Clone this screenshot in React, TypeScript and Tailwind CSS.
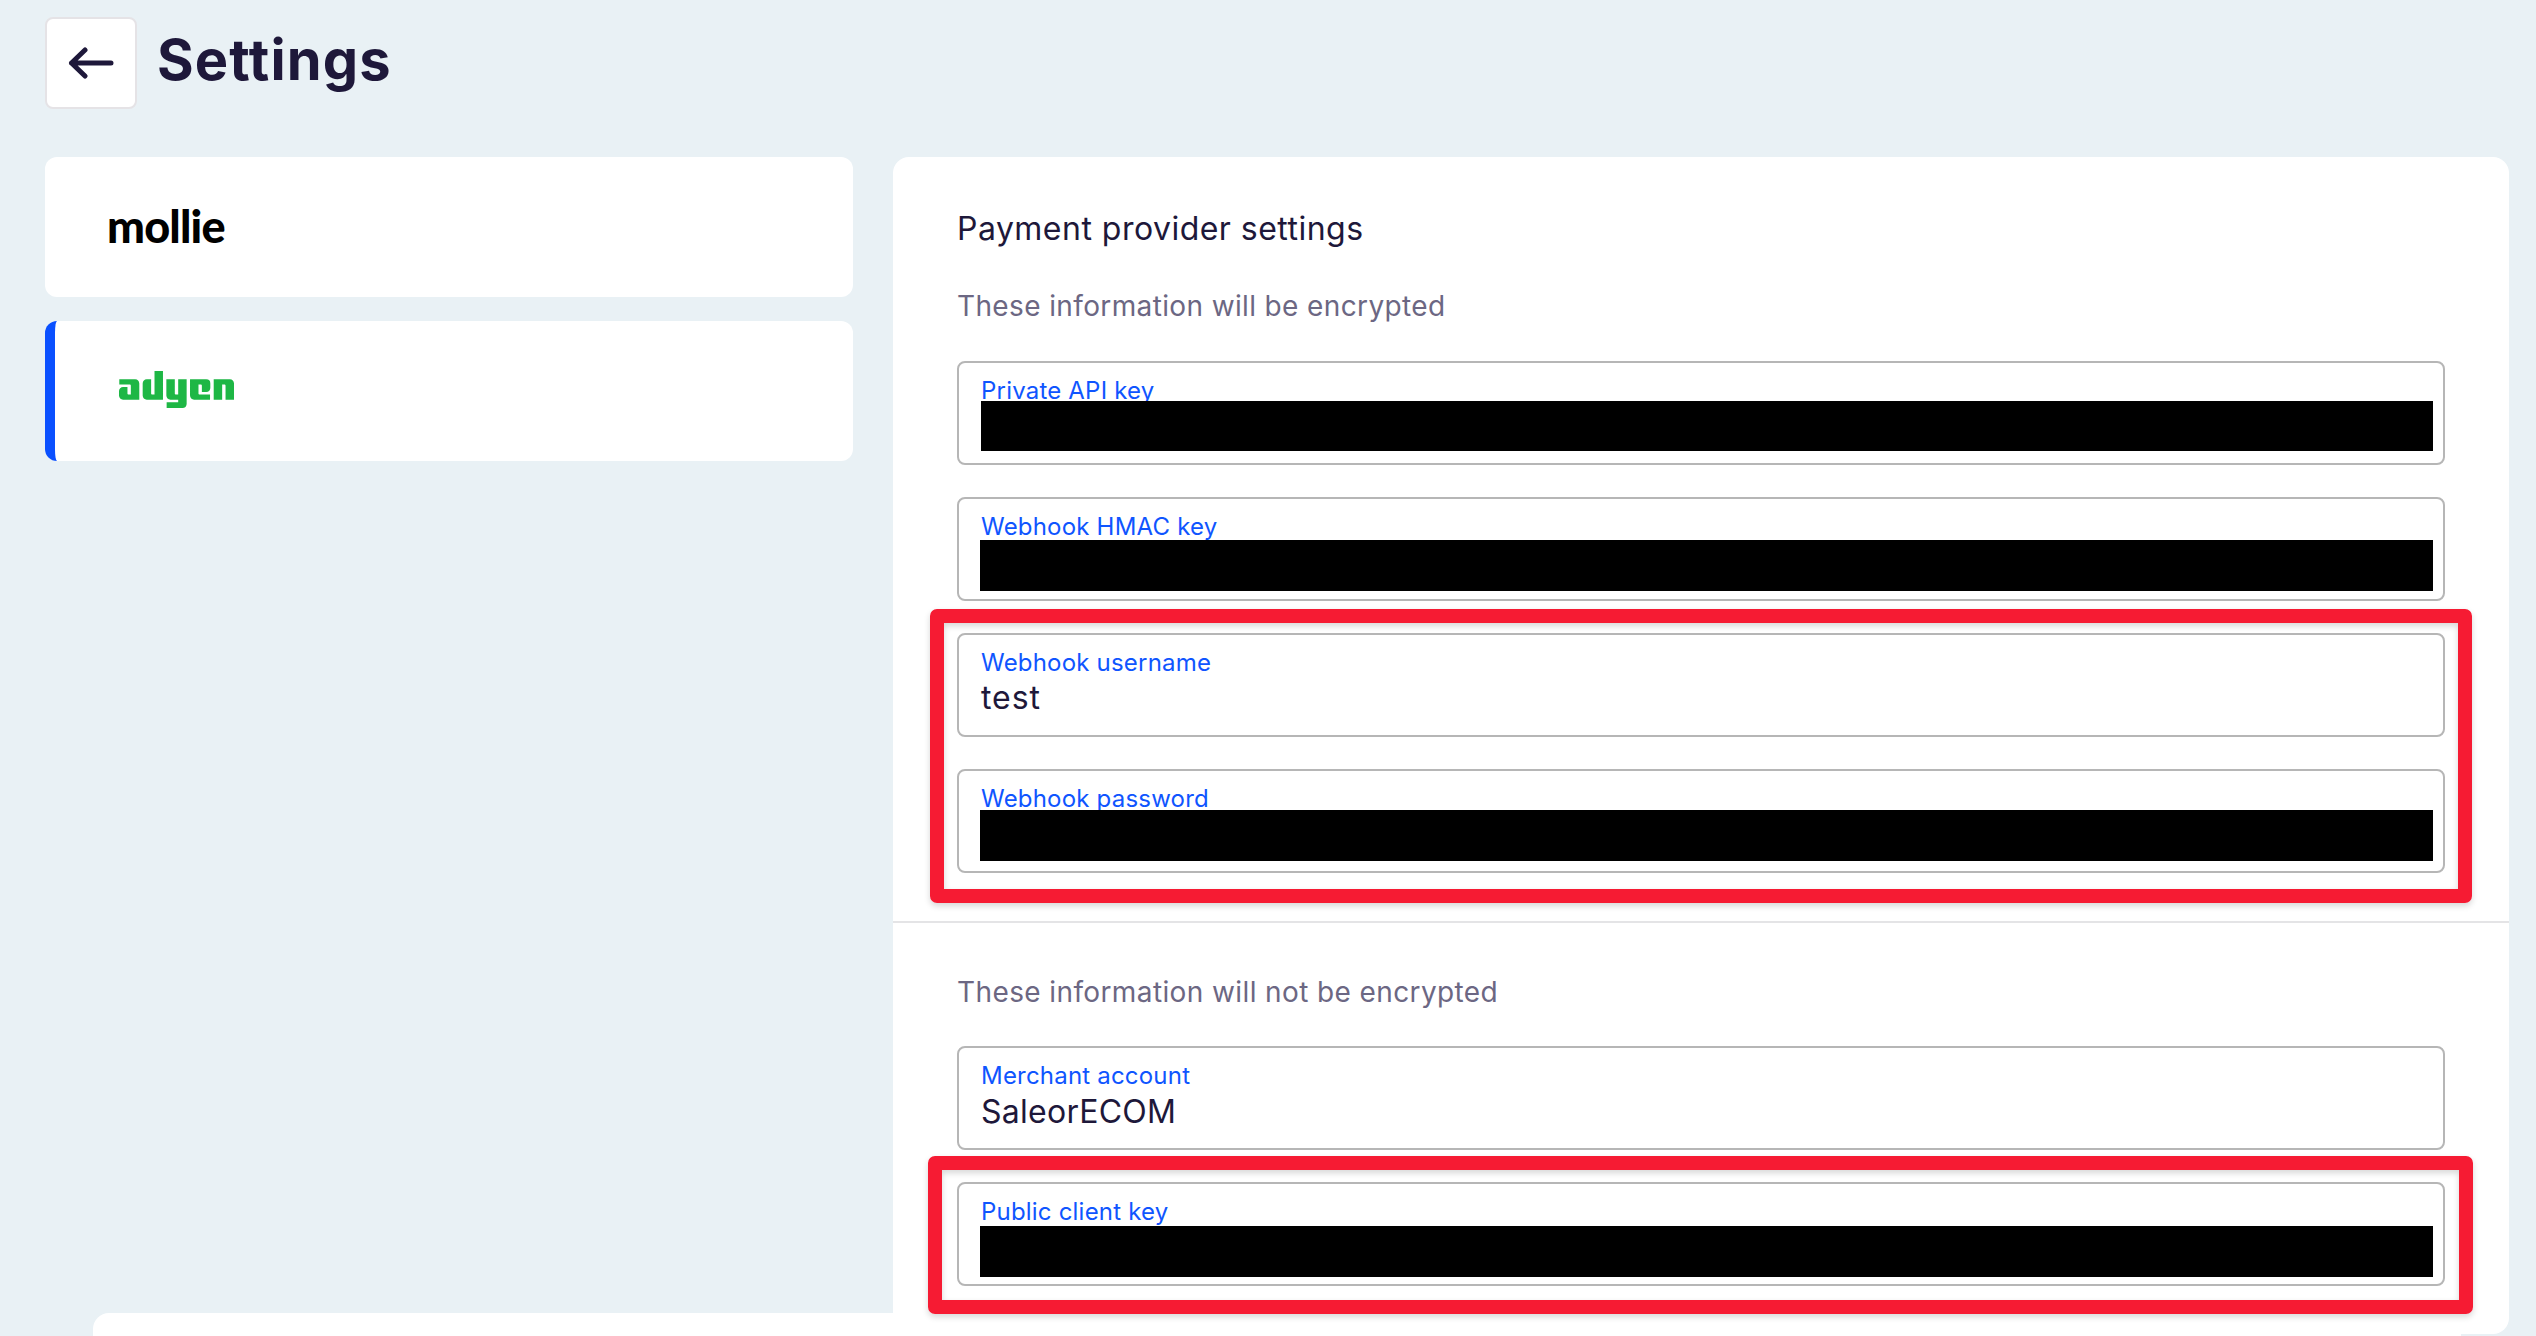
import { SiAdyen } from "react-icons/si";

type FieldProps = {
  label: string;
  value?: string;
  valueClass?: string;
  redaction?: string;
};

function Field({ label, value, valueClass = "", redaction }: FieldProps) {
  return (
    <div className="relative h-[104px] rounded-lg border-2 border-[#b6b6b6] px-[22px] pt-3">
      <div className="text-2xl leading-8 tracking-[0.2px] text-[#0f55ff]">{label}</div>
      {value && <div className={`text-[32px] leading-10 text-[#1e183a] ${valueClass}`}>{value}</div>}
      {redaction && <div className={`absolute bg-black ${redaction}`} />}
    </div>
  );
}

function Highlight({ className }: { className: string }) {
  return (
    <div
      className={`pointer-events-none absolute rounded-[7px] border-[14px] border-[#f61b33] shadow-[0_3px_6px_rgba(0,0,0,0.16),inset_0_3px_6px_rgba(0,0,0,0.16)] ${className}`}
    />
  );
}

export default function App() {
  return (
    <div className="relative isolate h-[1336px] w-[2536px] overflow-hidden bg-[#e9f1f5] pl-[45px] pr-[27px] pt-[17px] font-[Inter,sans-serif]">
      <header className="flex h-[92px] items-center gap-5">
        <button className="flex size-[92px] items-center justify-center rounded-lg border-2 border-[#e5e3e6] bg-white">
          <svg width="46" height="34" viewBox="0 0 46 34" fill="none" stroke="#1e183a" strokeWidth="5" strokeLinecap="round" strokeLinejoin="round">
            <path d="M17 4 L3.500 17 L17 30 M3.500 17 H43" />
          </svg>
        </button>
        <h1 className="pb-[7px] text-[56px] font-bold leading-[72px] tracking-[1.1px] text-[#1e183a]">Settings</h1>
      </header>

      <main className="mt-12 flex items-start gap-10">
        <nav className="flex w-[808px] flex-col gap-6">
          <a className="flex h-[140px] items-center rounded-xl bg-white pl-16">
            <svg width="116" height="36" viewBox="0 0 116 36" className="overflow-visible">
              <text x="-2" y="34" fontFamily="Lato, sans-serif" fontWeight="900" fontSize="45" letterSpacing="-0.8">
                mollie
              </text>
            </svg>
          </a>
          <a className="flex h-[140px] items-center rounded-xl border-l-10 border-[#0a50ff] bg-white pb-[3px] pl-16">
            <SiAdyen className="size-[115px] text-[#1eb745]" />
          </a>
        </nav>

        <div className="relative h-[1177px] grow rounded-2xl bg-white">
          <section className="flex flex-col px-16 pt-[50px]">
            <h2 className="text-[32px] leading-[44px] tracking-[0.48px] text-[#1e183a]">Payment provider settings</h2>
            <p className="mt-[35px] text-[28px] leading-10 tracking-[0.37px] text-[#6c6783]">These information will be encrypted</p>
            <div className="mt-[35px] flex flex-col gap-8">
              <Field label="Private API key" redaction="left-[22px] right-[10px] top-[38px] h-[50px]" />
              <Field label="Webhook HMAC key" redaction="left-[21px] right-[10px] top-[41px] h-[51px]" />
              <Field label="Webhook username" value="test" valueClass="-mt-px tracking-[0.95px]" />
              <Field label="Webhook password" redaction="left-[21px] right-[10px] top-[39px] h-[51px]" />
            </div>
          </section>
          <hr className="mt-12 border-t-2 border-[#e4e4e6]" />
          <section className="flex flex-col px-16 pt-[49px]">
            <p className="text-[28px] leading-10 tracking-[0.39px] text-[#6c6783]">These information will not be encrypted</p>
            <div className="mt-[34px] flex flex-col gap-8">
              <Field label="Merchant account" value="SaleorECOM" valueClass="tracking-[0.26px]" />
              <Field label="Public client key" redaction="left-[21px] right-[10px] top-[42px] h-[51px]" />
            </div>
          </section>
          <Highlight className="left-[36.500px] right-[37px] top-[452px] h-[294px]" />
          <Highlight className="left-[35px] right-[36px] top-[999px] h-[158px]" />
        </div>
      </main>

      <div className="absolute -z-10 left-[93px] top-[1313px] h-16 w-[2368px] rounded-2xl bg-white" />
    </div>
  );
}
